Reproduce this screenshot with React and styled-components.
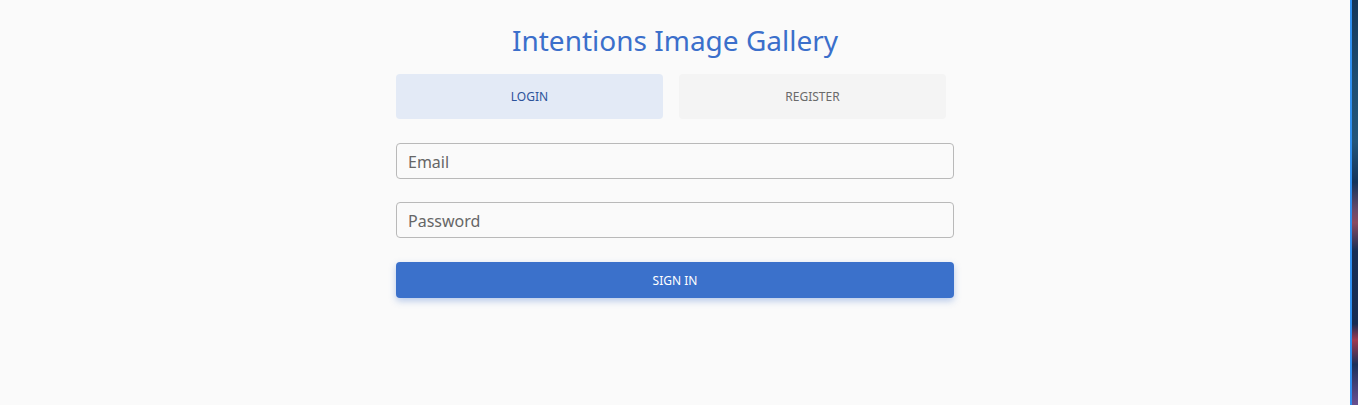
import React from 'react';
import styled, { createGlobalStyle } from 'styled-components';

const GlobalStyle = createGlobalStyle`
  html, body {
    margin: 0;
    padding: 0;
    background: #fafafa;
    font-family: "Noto Sans", "Open Sans", sans-serif;
  }
  * { box-sizing: border-box; }
`;

const Page = styled.div`
  display: flex;
  height: 100vh;
`;

const Main = styled.main`
  flex: 1;
  display: flex;
  justify-content: center;
  background: #fafafa;
`;

const Edge = styled.div`
  width: 8px;
  border-left: 2px solid #2f8ff0;
  background: linear-gradient(
    180deg,
    #14365a 0%,
    #1d4d72 20%,
    #23557a 35%,
    #13335a 45%,
    #6a4a6a 52%,
    #8a4a60 55%,
    #162d55 62%,
    #172b52 80%,
    #a03a50 84%,
    #1b2f5a 90%,
    #6a5090 100%
  );
`;

const Panel = styled.div`
  width: 558px;
  padding-top: 21px;
  display: flex;
  flex-direction: column;
`;

const Title = styled.h1`
  margin: 0 0 15px;
  font-size: 28px;
  line-height: 38px;
  font-weight: 400;
  color: #3b6fcb;
  text-align: center;
`;

const Tabs = styled.div`
  display: grid;
  grid-template-columns: 267px 267px;
  column-gap: 16px;
  margin-bottom: 24px;
`;

const Tab = styled.button`
  height: 45px;
  border: none;
  border-radius: 4px;
  font-family: inherit;
  font-size: 12px;
  text-transform: uppercase;
  cursor: pointer;
  background: ${p => (p.$active ? '#e3eaf6' : '#f4f4f4')};
  color: ${p => (p.$active ? '#2c539b' : '#6a6a6a')};
`;

const Form = styled.form`
  display: flex;
  flex-direction: column;
  gap: 23px;
`;

const Input = styled.input`
  height: 36px;
  width: 100%;
  padding: 2px 11px 0;
  border: 1px solid #b9b9b9;
  border-radius: 4px;
  background: #fafafa;
  font-family: inherit;
  font-size: 16px;
  color: #333;
  outline: none;

  &::placeholder {
    color: #666;
  }
`;

const Submit = styled.button`
  height: 36px;
  margin-top: 1px;
  padding-top: 2px;
  border: none;
  border-radius: 4px;
  background: #3b71cb;
  color: #fff;
  font-family: inherit;
  font-size: 12px;
  text-transform: uppercase;
  cursor: pointer;
  box-shadow: 0 3px 7px rgba(59, 113, 203, 0.35);
`;

export default function App() {
  return (
    <>
      <GlobalStyle />
      <Page>
        <Main>
          <Panel>
            <Title>Intentions Image Gallery</Title>
            <Tabs>
              <Tab $active>Login</Tab>
              <Tab>Register</Tab>
            </Tabs>
            <Form onSubmit={e => e.preventDefault()}>
              <Input type="email" placeholder="Email" />
              <Input type="password" placeholder="Password" />
              <Submit type="submit">Sign in</Submit>
            </Form>
          </Panel>
        </Main>
        <Edge />
      </Page>
    </>
  );
}
